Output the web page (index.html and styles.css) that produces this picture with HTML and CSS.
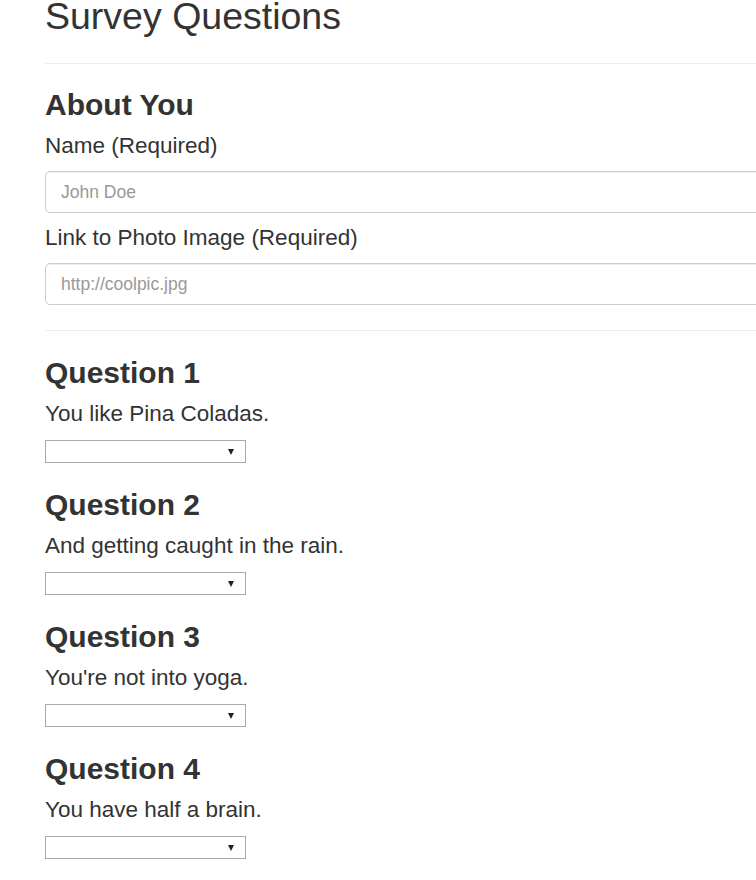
FILE: index.html
```html
<!DOCTYPE html>
<html lang="en">
<head>
<meta charset="utf-8">
<title>Survey Questions</title>
<link rel="stylesheet" href="styles.css">
</head>
<body>
<div class="page">
  <div class="page-header">
    <h1 class="title">Survey Questions</h1>
  </div>

  <section class="about">
    <h3 class="heading">About You</h3>
    <label class="field-label" for="name">Name (Required)</label>
    <input class="field" id="name" type="text" placeholder="John Doe">
    <label class="field-label" for="photo">Link to Photo Image (Required)</label>
    <input class="field" id="photo" type="text" placeholder="http://coolpic.jpg">
  </section>

  <hr class="divider">

  <section class="question">
    <h3 class="heading">Question 1</h3>
    <p class="prompt">You like Pina Coladas.</p>
    <span class="select-wrap"><select class="choice"><option></option></select></span>
  </section>

  <section class="question">
    <h3 class="heading">Question 2</h3>
    <p class="prompt">And getting caught in the rain.</p>
    <span class="select-wrap"><select class="choice"><option></option></select></span>
  </section>

  <section class="question">
    <h3 class="heading">Question 3</h3>
    <p class="prompt">You're not into yoga.</p>
    <span class="select-wrap"><select class="choice"><option></option></select></span>
  </section>

  <section class="question">
    <h3 class="heading">Question 4</h3>
    <p class="prompt">You have half a brain.</p>
    <span class="select-wrap"><select class="choice"><option></option></select></span>
  </section>
</div>
</body>
</html>
```

FILE: styles.css
```css
html, body {
  margin: 0;
  padding: 0;
  overflow: hidden;
  background: #fff;
}

body {
  font-family: "Liberation Sans", Arial, sans-serif;
  color: #333;
}

.page {
  width: 1000px;
  padding-left: 45px;
}

.page-header {
  margin-top: -4px;
  padding-bottom: 14px;
  border-bottom: 1px solid #eee;
}

.title {
  margin: 0 0 12px;
  font-size: 37.5px;
  line-height: 41px;
  font-weight: normal;
}

.about {
  display: flex;
  flex-direction: column;
  align-items: stretch;
  padding-top: 24px;
}

.heading {
  margin: 0;
  font-size: 30px;
  line-height: 33px;
  font-weight: bold;
}

.field-label,
.prompt {
  display: block;
  margin: 9px 0 0;
  font-size: 22.5px;
  line-height: 32px;
}

.field {
  box-sizing: border-box;
  height: 42px;
  margin-top: 9px;
  padding: 0 15px;
  border: 1px solid #ccc;
  border-radius: 5px;
  box-shadow: inset 0 1px 1px rgba(0, 0, 0, 0.075);
  font-family: "Liberation Sans", Arial, sans-serif;
  font-size: 17.5px;
  color: #555;
  background: #fff;
}

.field::placeholder {
  color: #999;
}

.divider {
  margin: 25px 0 0;
  border: 0;
  border-top: 1px solid #eee;
}

.question {
  display: flex;
  flex-direction: column;
  align-items: flex-start;
  padding-top: 25px;
}

.question + .question {
  padding-top: 25px;
}

.select-wrap {
  position: relative;
  display: block;
  margin-top: 10px;
  width: 201px;
  height: 23px;
}

.choice {
  box-sizing: border-box;
  width: 201px;
  height: 23px;
  margin: 0;
  border: 1px solid #a9a9a9;
  border-radius: 0;
  background: #fff;
  -webkit-appearance: none;
  appearance: none;
  font-family: "Liberation Sans", Arial, sans-serif;
  font-size: 13px;
}

.select-wrap::after {
  content: "";
  position: absolute;
  left: 183px;
  top: 9px;
  width: 0;
  height: 0;
  border-left: 3.5px solid transparent;
  border-right: 3.5px solid transparent;
  border-top: 6px solid #222;
  pointer-events: none;
}
```
